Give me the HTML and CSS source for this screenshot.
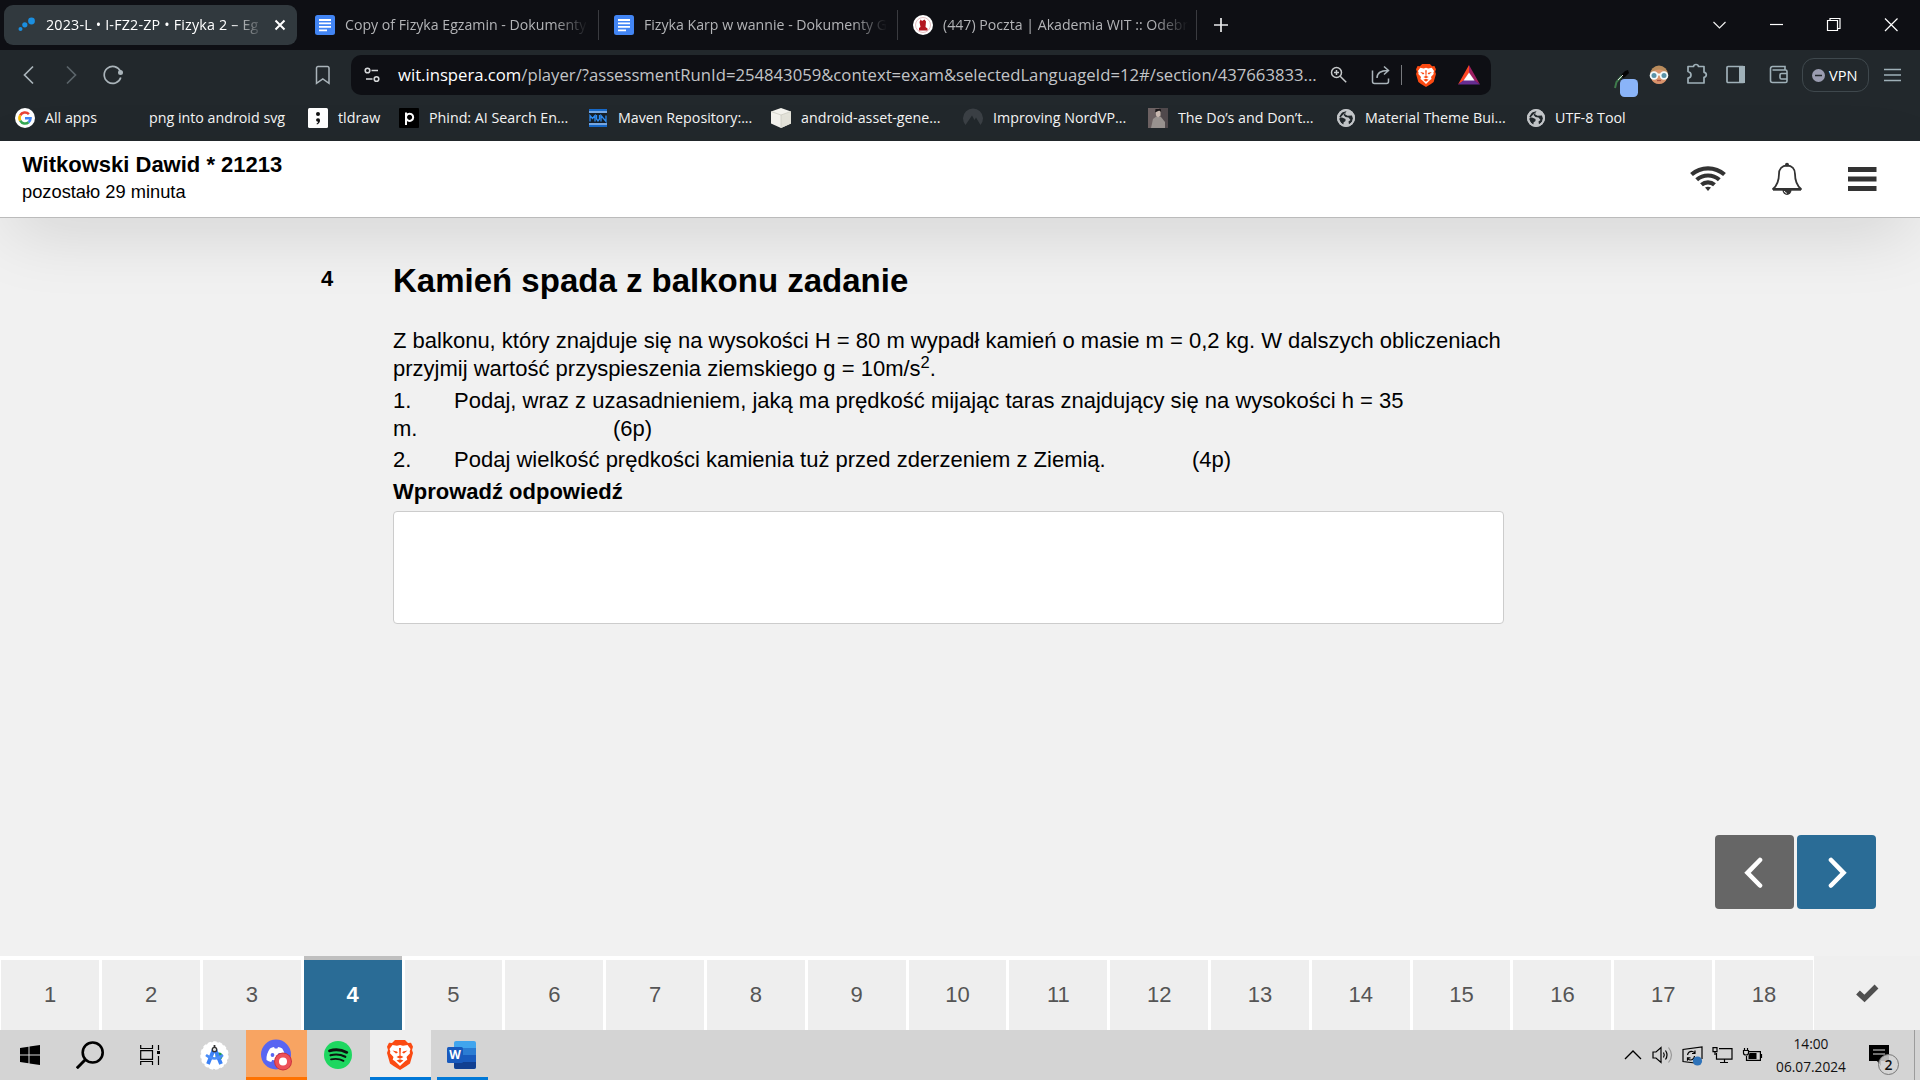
FILE: index.html
```html
<!DOCTYPE html>
<html lang="pl">
<head>
<meta charset="utf-8">
<title>2023-L • I-FZ2-ZP • Fizyka 2</title>
<link rel="stylesheet" href="styles.css">
</head>
<body>
<svg class="defs" width="0" height="0">
  <defs>
    <symbol id="docs" viewBox="0 0 20 20"><rect width="20" height="20" rx="2.500" fill="#4285f4"/><path d="M4 5h12M4 8.400h12M4 11.800h12M4 15.400h8" stroke="#fff" stroke-width="1.800"/></symbol>
    <symbol id="globe" viewBox="0 0 18 18"><circle cx="9" cy="9" r="9" fill="#c3c6c9"/><path d="M9.500 2 5 3.500 2 8l3 .5 3.500 1.500v2l-2 1.500v2.300L4 14 2 10M9.500 2 8 5.200l2.500 1.600 4.500-.3 1 3-1 3.500-3 2.500-.5-3 2-1.500-2-2.500-3-.5L6.500 6Z" fill="#22282c"/><circle cx="9" cy="9" r="8" fill="none" stroke="#c3c6c9" stroke-width="2"/></symbol>
    <symbol id="brave" viewBox="0 0 26 30"><path d="M8 0h10l3 3 3-.3 2 4-1 3.300 1 3-3 10.500L19.500 26 13 30l-6.500-4L3 23.500 0 13l1-3-1-3.300L2 2.700 5 3Z" fill="#fb4a12"/><path d="m13 5 3 .8 4.500-.8 3 4-.8 2.200.3 2L19.500 17l.8 2.700-2 1.300-5.300 5-5.300-5-2-1.300L6.500 17 3 13.200l.3-2L2.500 9l3-4 4.500.8Z" fill="#fff"/><path d="m5.500 10.500 4.500 1 .8 1.300-1.800.8zM20.500 10.500l-4.500 1-.8 1.300 1.800.8zM12 8h2l-.5 7.500 3 1.500-3.500 1.700L9.500 17l3-1.500zM9.500 20.500l3.500-1.200 3.500 1.200L13 23z" fill="#fb4a12"/></symbol>
  </defs>
</svg>

<div class="tabs">
  <div class="tab tab-active">
    <svg class="tab-ico" width="20" height="20"><circle cx="4.500" cy="14" r="2" fill="#1b8fe0"/><circle cx="8.800" cy="9.800" r="2.600" fill="#1b8fe0"/><circle cx="15.500" cy="6" r="3.400" fill="#1b8fe0"/></svg>
    <span class="tab-title">2023-L • I-FZ2-ZP • Fizyka 2 – Eg</span>
    <svg class="tab-close" width="12" height="12" stroke="#fff" stroke-width="2"><path d="m1.500 1.500 9 9m0-9-9 9"/></svg>
  </div>
  <div class="tab">
    <svg class="tab-ico"><use href="#docs"/></svg>
    <span class="tab-title">Copy of Fizyka Egzamin - Dokumenty</span>
  </div>
  <div class="tab">
    <svg class="tab-ico"><use href="#docs"/></svg>
    <span class="tab-title">Fizyka Karp w wannie - Dokumenty G</span>
  </div>
  <div class="tab">
    <svg class="tab-ico" viewBox="0 0 20 20"><circle cx="10" cy="10" r="10" fill="#fff"/><circle cx="10" cy="10" r="7.500" fill="none" stroke="#d9a3a7" stroke-width=".7"/><path d="M6 15.500v-2.500l1.500-1-1-5 1.200-2.500 1.300 1.500 2.500-1.500 1.500 2-.5 5.500 2 1.500v2Z" fill="#b31620"/></svg>
    <span class="tab-title">(447) Poczta | Akademia WIT :: Odebr</span>
  </div>
  <svg class="plus" width="14" height="14" stroke="#e8e9ea" stroke-width="1.700"><path d="M7 0v14M0 7h14"/></svg>
  <div class="win">
    <svg width="57" height="50" fill="none" stroke="#eee" stroke-width="1.200"><path d="m22.500 22 6 6 6-6"/></svg>
    <svg width="57" height="50" stroke="#fff" stroke-width="1.200"><path d="M22 24.500h13"/></svg>
    <svg width="57" height="50" fill="none" stroke="#fff" stroke-width="1.200"><path d="M22.500 20.500h10v10h-10zM25 20.500v-2h10v10h-2.500"/></svg>
    <svg width="58" height="50" stroke="#fff" stroke-width="1.200"><path d="m23 18.500 12.500 12.500m0-12.500L23 31"/></svg>
  </div>
</div>

<div class="toolbar">
  <div class="history">
    <svg width="42" height="50" fill="none" stroke="#aab4ba" stroke-width="1.700"><path d="M29 16.500 20.500 25l8.500 8.500"/></svg>
    <svg width="42" height="50" fill="none" stroke="#5b6469" stroke-width="1.700"><path d="m17 16.500 8.500 8.500-8.500 8.500"/></svg>
    <svg width="42" height="50" fill="none" stroke="#aab4ba" stroke-width="1.700"><path d="M30.500 21.500a8.500 8.500 0 1 0 .3 6"/><circle cx="30.500" cy="22.500" r="2.500" fill="#aab4ba" stroke="none"/></svg>
  </div>
  <svg class="mark" width="16" height="20" fill="none" stroke="#aab4ba" stroke-width="1.500"><path d="M1.500 3a1.500 1.500 0 0 1 1.500-1.500h9.500A1.500 1.500 0 0 1 14 3v15.300l-6.200-4.500-6.300 4.500Z"/></svg>
  <div class="address">
    <svg class="site" width="16" height="16" fill="none" stroke="#d5d7d9" stroke-width="1.600"><circle cx="3.500" cy="3.500" r="2.300"/><circle cx="12.500" cy="12" r="2.300"/><path d="M7.500 3.500H14M2 12h6.500"/></svg>
    <span class="url"><b>wit.inspera.com</b>/player/?assessmentRunId=254843059&amp;context=exam&amp;selectedLanguageId=12#/section/437663833...</span>
    <svg class="mag" width="18" height="18" fill="none" stroke="#c5c8ca" stroke-width="1.500"><circle cx="6.500" cy="6.500" r="5"/><path d="m10.200 10.200 6 6M4 6.500h5M6.500 4v5"/></svg>
    <svg class="share" width="20" height="20" fill="none" stroke="#aab4ba" stroke-width="1.500"><path d="M1.500 5.500v11a2 2 0 0 0 2 2h12a2 2 0 0 0 2-2v-3M6 13c0-5 3-7.500 11-7.500M13 1.500l4.500 4-4.500 4"/></svg>
    <i class="bar"></i>
    <svg class="shield"><use href="#brave"/></svg>
    <svg class="bat" width="22" height="20"><path d="M11 0v8l-5 7.500L0 19.500Z" fill="#ff4724"/><path d="M11 0v8l5 7.500 6 4Z" fill="#9e1f63"/><path d="M0 19.500h22l-6-4.500H6Z" fill="#662d91"/><path d="m11 7.500 5.500 8h-11Z" fill="#fff"/></svg>
  </div>
  <div class="ext">
    <svg class="e1" width="26" height="30"><path d="m3 20 1.500-6 6-7" fill="none" stroke="#3f7a4c" stroke-width="2"/><path d="m9 7 4-4 3-1 1 3-4 4-2 1Z" fill="#050505"/><path d="m6 12 5-5" stroke="#ddd"/><rect x="8" y="11" width="18" height="18" rx="4.500" fill="#8ab4f8"/></svg>
    <svg class="e2" width="20" height="20"><circle cx="10" cy="9.500" r="9" fill="#b98c5c"/><path d="M2 8q2-3 8-3.500 6 .5 8 3.500v5q-2 6-8 6t-8-6Z" fill="#d9936b"/><circle cx="5" cy="10.500" r="4.300" fill="#f4fafa"/><circle cx="15" cy="10.500" r="4.300" fill="#f4fafa"/><path d="M8 9.500h4" stroke="#f4fafa" stroke-width="2"/><circle cx="5" cy="10.500" r="2.500" fill="#5a93a8"/><circle cx="15" cy="10.500" r="2.500" fill="#5a93a8"/><path d="M8 15.500h4" stroke="#a14d43" stroke-width="1.300"/></svg>
    <svg class="e3" width="22" height="22" fill="none" stroke="#9fb0b8" stroke-width="1.700" stroke-linejoin="round"><path d="M2 3.500h5.500q.3-2 2.500-2t2.500 2H18V9.300q2.300.3 2.300 2.500T18 14.300V20H2v-4.800q3-.7 3-3.300T2 8.500Z"/></svg>
    <svg class="e4" width="20" height="20"><rect x="1" y="1.500" width="17" height="16" rx="1" fill="none" stroke="#9fb0b8" stroke-width="1.700"/><path d="M13 1h6v17h-6z" fill="#9fb0b8"/></svg>
    <svg class="e5" width="20" height="20" fill="none" stroke="#9fb0b8" stroke-width="1.600"><path d="M16 5V1.500H3.500a2 2 0 0 0-2 2v12a2 2 0 0 0 2 2h13a1.500 1.500 0 0 0 1.500-1.500V6.500A1.500 1.500 0 0 0 16.500 5h-13M18 8.500h-5.500a1.500 1.500 0 0 0-1.500 1.500v2.500a1.500 1.500 0 0 0 1.500 1.500H18"/></svg>
    <div class="vpn"><svg width="13" height="13"><circle cx="6.500" cy="6.500" r="6.500" fill="#9a9cb0"/><path d="M3 6.500h7" stroke="#22282c" stroke-width="1.500"/></svg><span>VPN</span></div>
    <svg class="e6" width="17" height="14" stroke="#9fb0b8" stroke-width="1.400"><path d="M0 1.500h17M0 7h17M0 12.500h17"/></svg>
  </div>
</div>

<div class="bookmarks">
  <div class="bm b0"><svg viewBox="0 0 20 20"><circle cx="10" cy="10" r="10" fill="#fff"/><g fill="none" stroke-width="2.600"><path d="M13.900 6.100A5.500 5.500 0 0 0 5.200 7.300" stroke="#ea4335"/><path d="M5.200 7.300a5.500 5.500 0 0 0 0 5.400" stroke="#fbbc05"/><path d="M5.200 12.700a5.500 5.500 0 0 0 8.400 1.500" stroke="#34a853"/><path d="M13.600 14.200a5.500 5.500 0 0 0 1.900-4H10" stroke="#4285f4"/></g></svg><span>All apps</span></div>
  <div class="bm b1"><i></i><span>png into android svg</span></div>
  <div class="bm b2"><svg viewBox="0 0 20 20"><rect width="20" height="20" rx="1.500" fill="#fff"/><circle cx="10" cy="6" r="2" fill="#111"/><path d="M8 12a2 2 0 1 1 4 .3q0 3-3 4.200l-.5-.8q1.700-.8 1.500-1.900A2 2 0 0 1 8 12Z" fill="#111"/></svg><span>tldraw</span></div>
  <div class="bm b3"><svg viewBox="0 0 20 20"><rect width="20" height="20" rx="1" fill="#000"/><path d="M7 4.500V17M7 9.200a3.600 3.600 0 1 1 0 .2" fill="none" stroke="#fff" stroke-width="2"/></svg><span>Phind: AI Search En...</span></div>
  <div class="bm b4"><svg viewBox="0 0 20 20"><path d="M1 1h18v18H1z" fill="#1769c9"/><path d="M1 4h18M1 16h18" stroke="#dceaff" stroke-width="1"/><path d="M1 5h18v10H1z" fill="#16202a"/><path d="M2 13.500v-6l2.500 3 2.500-3v6M8.500 7v4l1.500 2 1.500-2V7M13 13.500v-6l5 6v-6" fill="none" stroke="#2f8df5" stroke-width="1.300"/></svg><span>Maven Repository:...</span></div>
  <div class="bm b5"><svg viewBox="0 0 20 20"><path d="m10 0 10 3.500v12L10 20 0 15.500v-12Z" fill="#f4f3ee"/><path d="M10 7v13l10-4.500v-12Z" fill="#e4e3da"/><path d="m0 3.500 10 3.500 10-3.500M10 7v13" fill="none" stroke="#c9c8be" stroke-width=".7"/></svg><span>android-asset-gene...</span></div>
  <div class="bm b6"><svg viewBox="0 0 20 20"><path d="M2.500 17A10 10 0 1 1 17.500 17L13 9.500l-1.500 2.500L9 7.500Z" fill="#3b4045"/></svg><span>Improving NordVP...</span></div>
  <div class="bm b7"><svg viewBox="0 0 20 20"><path d="M0 0h20v20H0z" fill="#6d6263"/><path d="M11 0h9v20h-5z" fill="#514a4d"/><path d="m3 20 2-9 4-3 4 1 4 5v6Z" fill="#9a9491"/><path d="M7.500 2.500h5v5l-2.500 2-2-2Z" fill="#c9b9b0"/><path d="M7 4.500 7.500 1h5.200l.5 3-2-1.500Z" fill="#1b1719"/></svg><span>The Do’s and Don’t...</span></div>
  <div class="bm b8"><svg><use href="#globe"/></svg><span>Material Theme Bui...</span></div>
  <div class="bm b9"><svg><use href="#globe"/></svg><span>UTF-8 Tool</span></div>
</div>

<header class="head">
  <div class="who"><strong>Witkowski Dawid * 21213</strong><span>pozostało 29 minuta</span></div>
  <div class="head-ico">
    <svg class="wifi" width="36" height="26" fill="none" stroke="#333" stroke-width="4.200"><path d="M1.500 9.500a25 25 0 0 1 33 0M6.700 14.800a17 17 0 0 1 22.600 0M11.500 19.800a9.800 9.800 0 0 1 13 0"/><path d="M15 22.500q3-1.500 6 0L18 26Z" fill="#333" stroke="none"/></svg>
    <svg class="bell" width="32" height="34" fill="none" stroke="#333" stroke-width="1.800"><path d="M16 3.500c-5 0-8 3.500-8 8.500 0 8-2 11.500-6 15h28c-4-3.500-6-7-6-15 0-5-3-8.500-8-8.500Z" stroke-linejoin="round"/><path d="M2 27.500h28" stroke-width="2.400"/><circle cx="16" cy="2.700" r="2" fill="#333" stroke="none"/><path d="M11.500 28a4.500 5 0 0 0 9 0Z" fill="#333" stroke="none"/><path d="M13.300 29q.5 2 2.500 2.300" stroke="#fff" stroke-width="1"/></svg>
    <svg class="burger" width="29" height="25"><path d="M0 2.500h28.500M0 12h28.500M0 21.500h28.500" stroke="#333" stroke-width="4.800"/></svg>
  </div>
</header>

<main class="exam">
  <div class="num">4</div>
  <article class="task">
    <h1>Kamień spada z balkonu zadanie</h1>
    <p class="lead">Z balkonu, który znajduje się na wysokości H = 80 m wypadł kamień o masie m = 0,2 kg. W dalszych obliczeniach<br>przyjmij wartość przyspieszenia ziemskiego g = 10m/s<sup>2</sup>.</p>
    <p><span class="no">1.</span>Podaj, wraz z uzasadnieniem, jaką ma prędkość mijając taras znajdujący się na wysokości h = 35<br><span class="metre">m.</span>(6p)</p>
    <p><span class="no">2.</span><span class="second">Podaj wielkość prędkości kamienia tuż przed zderzeniem z Ziemią.</span>(4p)</p>
    <h2>Wprowadź odpowiedź</h2>
    <div class="answer"></div>
  </article>
  <div class="step">
    <div class="prev"><svg width="20" height="32" fill="none" stroke="#fff" stroke-width="4.600" stroke-linecap="round"><path d="M16 4 3.500 16.800 16 29.500"/></svg></div>
    <div class="next"><svg width="20" height="32" fill="none" stroke="#fff" stroke-width="4.600" stroke-linecap="round"><path d="M4 4l12.500 12.800L4 29.500"/></svg></div>
  </div>
</main>

<nav class="pages">
  <div class="cells">
    <span>1</span><span>2</span><span>3</span><span class="on">4</span><span>5</span><span>6</span><span>7</span><span>8</span><span>9</span><span>10</span><span>11</span><span>12</span><span>13</span><span>14</span><span>15</span><span>16</span><span>17</span><span>18</span>
  </div>
  <div class="done"><svg width="24" height="20" fill="none" stroke="#4f4f4f" stroke-width="5.500"><path d="m3 9.500 6.500 6L21.500 3.500" stroke-linejoin="miter"/></svg></div>
</nav>

<footer class="taskbar">
  <div class="app a-win"><svg width="20" height="20"><path d="m0 3 8.500-1.200V9.500H0ZM9.500 1.600 20 0v9.500H9.500ZM0 10.500h8.500v7.700L0 17ZM9.500 10.500H20V20L9.500 18.400Z"/></svg></div>
  <div class="app a-find"><svg width="28" height="28" fill="none" stroke="#000" stroke-width="2.600"><circle cx="16.700" cy="11.500" r="10"/><path d="m9.500 18.500-8.700 8.700" stroke-width="3"/></svg></div>
  <div class="app a-view"><svg width="20" height="20" fill="none" stroke="#000" stroke-width="1.200"><path d="M.7 0v3.500h11.800V0M.7 20v-3.500h11.800V20M.7 5.700h11.800v8.600H.7zM18.500 0v5M18.500 11v9"/><path d="M17 6h3v3h-3z" fill="#000" stroke="none"/></svg></div>
  <div class="app a-studio"><svg width="29" height="29"><circle cx="14.500" cy="14.500" r="13.500" fill="#fff"/><circle cx="14.500" cy="14.500" r="13.200" fill="none" stroke="#fff" stroke-width="2" stroke-dasharray="3.500 2"/><circle cx="19" cy="15" r="3.500" fill="#1e9e4e"/><path d="M14 8 8 23M15 8l6 15" stroke="#3b82f6" stroke-width="3.800"/><path d="M6 14q8.500 7 17 0" fill="none" stroke="#4a8df8" stroke-width="2.400"/><circle cx="14.500" cy="8.500" r="2.200" fill="#e6e6e6" stroke="#333" stroke-width="1.300"/><path d="M14.500 4v2" stroke="#333" stroke-width="1.800"/></svg></div>
  <div class="app a-discord"><svg width="32" height="32"><circle cx="15" cy="15.500" r="15" fill="#5865f2"/><path d="M9 9.500q2-1.300 4-1.500l.8 1.500h2.600L17 8q2.200.2 4.200 1.500Q24.800 15 24.500 21q-2 1.500-4.500 2l-1-2q-3.800.8-7.800 0l-1 2Q7.500 22.500 5.500 21 5 15 9 9.500Z" fill="#fff"/><ellipse cx="11.500" cy="16" rx="1.900" ry="2.100" fill="#5865f2"/><ellipse cx="18.500" cy="16" rx="1.900" ry="2.100" fill="#5865f2"/><circle cx="22" cy="22.500" r="9" fill="#c8323c"/><circle cx="22" cy="22.500" r="8" fill="#ed5058"/><circle cx="22" cy="22.500" r="4" fill="#fff"/></svg></div>
  <div class="app a-spot"><svg width="28" height="28"><circle cx="14" cy="14" r="14" fill="#1ed760"/><g fill="none" stroke="#0d1410" stroke-linecap="round"><path d="M5.500 9.800q9-2.700 17.300 1.600" stroke-width="2.800"/><path d="M6.500 14.300q7.800-2.200 14.800 1.500" stroke-width="2.200"/><path d="M7 18.400q6.800-1.700 12.500 1.500" stroke-width="1.800"/></g></svg></div>
  <div class="app a-brave"><svg width="26" height="30"><use href="#brave"/></svg></div>
  <div class="app a-word"><svg width="30" height="28"><rect x="7" y="0" width="22" height="28" rx="2" fill="#41a5ee"/><path d="M7 7h22v7H7z" fill="#2b7cd3"/><path d="M7 14h22v7H7z" fill="#185abd"/><path d="M7 21h22v5a2 2 0 0 1-2 2H9a2 2 0 0 1-2-2Z" fill="#103f91"/><rect x="0" y="6" width="16" height="16" rx="1.500" fill="#185abd"/><text x="8" y="18" class="w">W</text></svg></div>
  <div class="tray">
    <svg class="y1" width="18" height="10" fill="none" stroke="#000" stroke-width="1.300"><path d="m1 9 8-8 8 8"/></svg>
    <svg class="y2" width="22" height="18" fill="none" stroke="#000" stroke-width="1.200"><path d="M1 6h3l5-4.500v15L4 12H1ZM11.500 6.500q1.500 2.500 0 5M13.500 4.500q3 4.500 0 9"/><path d="M16.500 1.500q6 7.500 0 15" stroke="#999"/></svg>
    <svg class="y3" width="21" height="21" fill="none" stroke="#000" stroke-width="1.200"><path d="m13 18-12-1.500v-12L20 2v12M5.500 10q1-4 5-3.500 1.500.3 2.500 1.800M13 5.500v3h-3M12.500 11q-.5 4-4.500 4-1.500-.3-2.500-2M5.500 15.800v-3h3"/><circle cx="15.500" cy="16" r="4.600" fill="#2f73b9" stroke="none"/></svg>
    <svg class="y4" width="21" height="18" fill="none" stroke="#000" stroke-width="1.200"><path d="M7 2.600h13v10.600H4.500V7M12.500 13v3.500M8 16.500h8M1 1.600h4v4H1zM3 5.600V9"/></svg>
    <svg class="y5" width="21" height="16" fill="none" stroke="#000" stroke-width="1.200"><path d="M6.500 4.600h11.900v8.800H4.500V9M19.500 7v4M1.500 3.500h5v2.500q0 2-2.500 2t-2.500-2zM2.500 3.500V1M5.500 3.500V1"/><path d="M7.500 6h7v6h-8V9z" fill="#000" stroke="none"/></svg>
    <div class="clock"><span>14:00</span><span>06.07.2024</span></div>
    <svg class="note" width="31" height="31"><path d="M0 0h20v16h-8v5l-4-5H0Z"/><path d="M4 5h12M4 9h12" stroke="#ddd" stroke-width="1.200"/><circle cx="19.500" cy="19.500" r="10" fill="#d4d4d4" fill-opacity=".86" stroke="#777"/><text x="19.500" y="25" class="cnt">2</text></svg>
    <i class="peek"></i>
  </div>
</footer>
</body>
</html>
```
FILE: styles.css
```css
* { box-sizing: border-box; }
html, body { margin: 0; height: 100%; }
body {
  width: 1920px; height: 1080px; overflow: hidden;
  display: flex; flex-direction: column;
  background: #f1f1f1; color: #000;
  font-family: "Liberation Sans", Arial, sans-serif; font-size: 22px;
}
svg { display: block; flex: none; }
.defs { position: absolute; }
.tabs, .toolbar, .bookmarks, .taskbar { font-family: "Open Sans", "Noto Sans", sans-serif; font-size: 14px; white-space: nowrap; flex: none; }

/* tab strip */
.tabs { height: 50px; background: #0e0f14; display: flex; align-items: center; padding-left: 4px; }
.tab { flex: none; width: 299px; height: 30px; display: flex; align-items: center; gap: 10px; padding: 0 10px 0 15px; color: #b3b4b7; border-right: 1px solid #3a3b40; font-size: 14.150px; }
.tab-active { width: 293px; height: 40px; margin-right: 3px; background: #31393e; border: 0; border-radius: 9px; color: #fff; padding: 0 11px 0 12px; font-size: 14.300px; letter-spacing: .18px; }
.tab-ico { width: 20px; height: 20px; }
.tab-title { flex: 1; margin-top: -2px; -webkit-mask: linear-gradient(90deg, #000 calc(100% - 34px), transparent); mask: linear-gradient(90deg, #000 calc(100% - 34px), transparent); }
.tab-active .tab-title { flex: none; width: 218px; }
.plus { margin-left: 17px; }
.win { margin-left: auto; display: flex; width: 229px; }

/* toolbar */
.toolbar { height: 50px; background: #22282c; display: flex; align-items: center; }
.history { display: flex; padding-left: 4px; width: 315px; }
.history svg:nth-child(2) { margin-left: 4px; }
.history svg:nth-child(3) { margin-left: -2px; }
.address { margin-left: 20px; width: 1140px; height: 40px; border-radius: 10px; background: #0e0f14; display: flex; align-items: center; padding-left: 13px; }
.url { flex: none; margin: -2px 0 0 18px; width: 932px; font-size: 16.680px; color: #c2c4c7; }
.url b { font-weight: 400; color: #fff; }
.share { margin-left: 23px; }
.bar { width: 1px; height: 20px; margin-left: 10px; background: #77797d; }
.shield { width: 20px; height: 23px; margin-left: 14px; }
.bat { margin-left: 22px; }
.ext { flex: 1; display: flex; align-items: center; padding-left: 121px; }
.e1 { margin-top: 16px; }
.e2 { margin-left: 11px; }
.e3 { margin-left: 17px; margin-top: -2px; }
.e4 { margin-left: 18px; }
.e5 { margin-left: 23px; }
.vpn { margin-left: 13px; width: 67px; height: 34px; border: 1px solid #3f484d; border-radius: 12px; display: flex; align-items: center; gap: 4px; padding-left: 9px; color: #fff; font-size: 14.600px; }
.e6 { margin-left: 15px; }

/* bookmarks bar */
.bookmarks { height: 41px; padding: 0 0 5px 15px; background: #22282c; display: flex; align-items: center; color: #f5f5f5; font-size: 14.250px; }
.bm { display: flex; align-items: center; gap: 10px; flex: none; }
.bm svg, .bm i { width: 20px; height: 20px; }
.bm span { margin-top: -2px; }
.b0 { width: 104px; } .b1 { width: 189px; } .b2 { width: 91px; } .b3 { width: 189px; } .b4 { width: 183px; }
.b5 { width: 192px; } .b6 { width: 185px; } .b7 { width: 189px; } .b8 { width: 190px; }
.b8 svg, .b9 svg { width: 18px; height: 18px; }

/* exam header */
.head { flex: none; height: 77px; background: #fff; border-bottom: 1px solid #bbb; display: flex; justify-content: space-between; box-shadow: 0 20px 70px -10px rgba(0,0,0,.15); padding: 11px 43px 0 22px; }
.who { display: flex; flex-direction: column; }
.who strong { line-height: 26px; }
.who span { font-size: 18.300px; line-height: 28px; }
.head-ico { display: flex; align-items: flex-start; }
.wifi { margin-top: 13px; }
.bell { margin: 10px 0 0 45px; }
.burger { margin: 15px 0 0 45px; }

/* question */
.exam { flex: 1; display: grid; grid-template-columns: 72px 1111px 1fr; grid-template-rows: 1fr auto; padding: 41px 44px 47px 321px; }
.num { font-weight: 700; line-height: 40px; }
.task h1 { margin: 0 0 24px; font-size: 33px; line-height: 44px; font-weight: 700; }
.task p { margin: 0 0 4px; line-height: 27.500px; white-space: nowrap; }
.task .lead { line-height: 28px; margin-bottom: 4px; }
.task sup { font-size: 16.500px; line-height: 0; vertical-align: baseline; position: relative; top: -8px; }
.task h2 { margin: 0; font-size: 22px; line-height: 28px; }
.no { display: inline-block; width: 61px; }
.metre { display: inline-block; width: 220px; }
.second { display: inline-block; width: 738px; }
.answer { margin-top: 5.500px; height: 113px; background: #fff; border: 1px solid #ccc; border-radius: 4px; }
.step { grid-column: 3; grid-row: 2; display: flex; justify-content: flex-end; gap: 3px; }
.step div { width: 79px; height: 74px; border-radius: 4px; display: flex; align-items: center; justify-content: center; }
.step .prev { background: #666; padding-right: 2px; }
.next { background: #2a6c96; }

/* question navigation */
.pages { flex: none; height: 74px; display: flex; }
.cells { width: 1814px; display: flex; background: #fff; gap: 3px; padding: 0 1px 0 1.300px; }
.cells span { flex: 1; margin-top: 4px; background: #eee; color: #555; display: flex; align-items: center; justify-content: center; }
.cells .on { margin-top: 0; border-top: 4px solid #bfbfbf; background: #2a6c96; color: #fff; font-weight: 700; }
.done { flex: 1; background: #efefef; display: flex; align-items: center; justify-content: center; }

/* taskbar */
.taskbar { height: 50px; background: #d4d4d4; display: flex; }
.app { height: 50px; display: flex; align-items: center; justify-content: center; }
.a-win { width: 60px; } .a-find { width: 60px; } .a-view { width: 60px; } .a-studio { width: 66px; padding-left: 2px; }
.a-discord { width: 61px; background: #f8a462; border-bottom: 3px solid #ff7200; padding: 3px 0 0 1px; }
.a-spot { width: 63px; padding-right: 2px; }
.a-brave { width: 61px; background: #eee; border-bottom: 3px solid #0078d7; padding: 2px 2px 0 0; }
.a-word { width: 51px; margin-left: 6px; border-bottom: 3px solid #0078d7; padding: 3px 1px 0 0; }
.w { font: 700 12px "Open Sans", sans-serif; fill: #fff; text-anchor: middle; }
.tray { margin-left: auto; display: flex; align-items: center; width: 296px; }
.y2 { margin-left: 10px; }
.y3 { margin-left: 8px; }
.y4 { margin-left: 9px; }
.y5 { margin-left: 9px; }
.clock { width: 96px; display: flex; flex-direction: column; align-items: center; font-size: 13.700px; line-height: 23px; color: #111; margin-top: -1px; }
.note { margin: 11px 0 0 10px; }
.cnt { font: 600 14px "Open Sans", sans-serif; fill: #111; text-anchor: middle; }
.peek { width: 1px; height: 50px; margin-left: auto; margin-right: 5px; background: #9c9c9c; }
```
